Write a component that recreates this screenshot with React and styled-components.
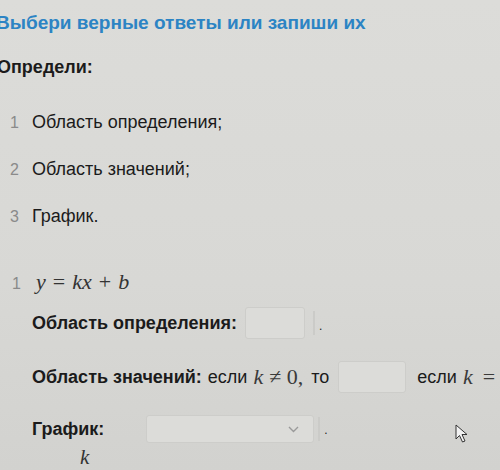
import React from 'react';
import styled, { createGlobalStyle } from 'styled-components';

const GlobalStyle = createGlobalStyle`
  html, body {
    margin: 0;
    padding: 0;
    background: #d9d9d6;
    overflow: hidden;
  }
  body {
    font-family: "Liberation Sans", Arial, sans-serif;
    color: #1b1b1b;
  }
`;

const Page = styled.div`
  width: 500px;
  height: 470px;
  overflow: hidden;
  background: linear-gradient(180deg, #dcdcd9 0%, #d8d8d5 60%, #d2d2cf 100%);
  padding-top: 11px;
  box-sizing: border-box;
  position: relative;
`;

const Title = styled.h1`
  margin: 0 0 0 -4px;
  font-size: 19px;
  font-weight: bold;
  color: #2c84c4;
  line-height: 24px;
`;

const Heading = styled.div`
  margin: 20px 0 0 -3px;
  font-size: 18px;
  font-weight: bold;
  line-height: 24px;
`;

const List = styled.ol`
  list-style: none;
  margin: 31px 0 0 0;
  padding: 0;
  display: flex;
  flex-direction: column;
  gap: 22px;
`;

const Item = styled.li`
  display: flex;
  align-items: baseline;
  font-size: 18px;
  line-height: 24px;
`;

const Num = styled.span`
  width: 32px;
  padding-left: ${p => p.$indent || 10}px;
  box-sizing: border-box;
  color: #8a8a8a;
  font-size: 16px;
`;

const Task = styled.div`
  margin-top: 40px;
`;

const MathLine = styled.div`
  display: flex;
  align-items: baseline;
  line-height: 26px;
`;

const Formula = styled.span`
  font-family: "Liberation Serif", "Times New Roman", serif;
  font-size: 22px;
  color: #333;
  margin-left: 4px;
`;

const Var = styled.i`
  font-style: italic;
`;

const Op = styled.span`
  margin: 0 7px;
`;

const Row = styled.div`
  display: flex;
  align-items: center;
  margin: ${p => p.$top}px 0 0 32px;
  font-size: 18px;
  white-space: nowrap;
`;

const Label = styled.b`
  font-weight: bold;
`;

const Text = styled.span`
  margin-left: ${p => p.$ml || 6}px;
`;

const Input = styled.div`
  width: ${p => p.$w}px;
  height: ${p => p.$h || 32}px;
  margin-left: ${p => p.$ml || 0}px;
  background: #dcdcd9;
  border: 1px solid #cdcdca;
  border-radius: 3px;
  box-sizing: border-box;
  display: flex;
  align-items: center;
  justify-content: flex-end;
  padding-right: 14px;
`;

const Bar = styled.span`
  width: 2px;
  height: 24px;
  margin-left: ${p => p.$ml || 8}px;
  background: #cbcbc8;
`;

const Dot = styled.span`
  margin-left: 4px;
  align-self: flex-end;
  margin-bottom: 6px;
  font-size: 12px;
`;

const Chevron = styled.svg`
  width: 11px;
  height: 7px;
`;

const MathInline = styled.span`
  font-family: "Liberation Serif", "Times New Roman", serif;
  font-style: ${p => (p.$upright ? 'normal' : 'italic')};
  font-size: 22px;
  margin: 0 ${p => (p.$m == null ? 5 : p.$m)}px;
  color: #3a3a3a;
`;

const Cursor = styled.svg`
  position: absolute;
  left: 455px;
  top: 424px;
  width: 14px;
  height: 20px;
`;

const Fraction = styled.div`
  margin: 2px 0 0 80px;
  font-family: "Liberation Serif", "Times New Roman", serif;
  font-style: italic;
  font-size: 21px;
  line-height: 24px;
  color: #333;
`;

export default function App() {
  return (
    <Page>
      <GlobalStyle />
      <Title>Выбери верные ответы или запиши их</Title>
      <Heading>Определи:</Heading>
      <List>
        <Item><Num>1</Num>Область определения;</Item>
        <Item><Num>2</Num>Область значений;</Item>
        <Item><Num>3</Num>График.</Item>
      </List>
      <Task>
        <MathLine>
          <Num $indent={12}>1</Num>
          <Formula>
            <Var>y</Var><Op>=</Op><Var>kx</Var><Op>+</Op><Var>b</Var>
          </Formula>
        </MathLine>
        <Row $top={10}>
          <Label>Область определения:</Label>
          <Input $w={60} $ml={8} />
          <Bar />
          <Dot>.</Dot>
        </Row>
        <Row $top={22}>
          <Label>Область значений:</Label>
          <Text>если</Text>
          <MathInline $m={6}>k</MathInline>
          <MathInline $upright $m={0}>≠ 0,</MathInline>
          <Text $ml={8}>то</Text>
          <Input $w={68} $ml={9} />
          <Text $ml={11}>если</Text>
          <MathInline $m={6}>k</MathInline>
          <MathInline $upright $m={4}>=</MathInline>
        </Row>
        <Row $top={22}>
          <Label>График:</Label>
          <Input $w={168} $h={28} $ml={42}>
            <Chevron viewBox="0 0 11 7">
              <path d="M1 1 L5.5 5.5 L10 1" fill="none" stroke="#9a9a9a" strokeWidth="1.4" />
            </Chevron>
          </Input>
          <Bar $ml={4} />
          <Dot>.</Dot>
        </Row>
        <Fraction>k</Fraction>
      </Task>
      <Cursor viewBox="0 0 14 20">
        <path d="M1 1 L1 15 L4.5 11.5 L7.5 18 L10 17 L7 10.5 L12 10.5 Z" fill="#f2f2f2" stroke="#333" strokeWidth="1" />
      </Cursor>
    </Page>
  );
}
